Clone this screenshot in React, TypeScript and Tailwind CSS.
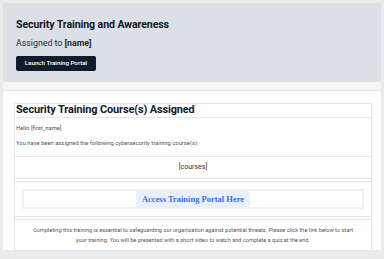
export default function App() {
  return (
    <div className="w-[384px] h-[259px] overflow-hidden bg-[#ebebeb] px-[3px] pt-[3px] font-['Roboto',sans-serif]">
      {/* top banner */}
      <div className="h-[79px] rounded-[3px] bg-[#dcdfe3] pl-[13px] pt-[15px]">
        <h1 className="text-[10.6px] leading-[14px] font-bold text-[#111827] tracking-[-0.1px]">
          Security Training and Awareness
        </h1>
        <p className="mt-[6px] text-[8.8px] leading-[10px] text-[#1f2937]">
          Assigned to <span className="font-bold">[name]</span>
        </p>
        <button className="mt-[7px] h-[15px] w-[80px] rounded-[2px] bg-[#0f1c2b] text-[6.2px] font-medium text-white">
          Launch Training Portal
        </button>
      </div>
      <div className="h-[9px] bg-[#f5f5f5] border-b border-[#e2e2e2]" />

      {/* email body */}
      <div className="h-[159px] bg-white px-[11px] pt-[12px]">
        <div className="w-[358px] border border-[#e6e6e6] flex flex-col gap-[2px] text-[#4b5563]">
          <div className="border-b border-[#e6e6e6] pl-[1px] h-[14px] flex items-center">
            <h2 className="text-[10.9px] font-bold text-[#111827] leading-none tracking-[-0.1px]">
              Security Training Course(s) Assigned
            </h2>
          </div>
          <div className="h-[34px] pl-[1px] pt-[5px] text-[5.85px] leading-[7px] text-[#555]">
            <p>Hello [first_name]</p>
            <p className="mt-[8px]">You have been assigned the following cybersecurity training course(s):</p>
          </div>
          <div className="h-[23px] border-y border-[#e6e6e6] flex items-center justify-center text-[7px] text-[#333]">
            [courses]
          </div>
          <div className="h-[36px] border-y border-[#e6e6e6] px-[7px] flex items-center">
            <div className="w-full h-[20px] border-2 border-[#f0f0f0] flex items-center justify-center">
              <span className="h-[16px] px-[6px] rounded-[2px] bg-[#e8f0fe] flex items-center text-[8.5px] font-bold text-[#3b6fe6] font-['Liberation_Serif',serif]">
                Access Training Portal Here
              </span>
            </div>
          </div>
          <div className="h-[31px] border-t border-[#e6e6e6] flex flex-col items-center justify-center text-center text-[5.6px] leading-[10px] text-[#555]">
            <p>Completing this training is essential to safeguarding our organization against potential threats. Please click the link below to start</p>
            <p>your training. You will be presented with a short video to watch and complete a quiz at the end.</p>
          </div>
        </div>
      </div>
    </div>
  );
}
